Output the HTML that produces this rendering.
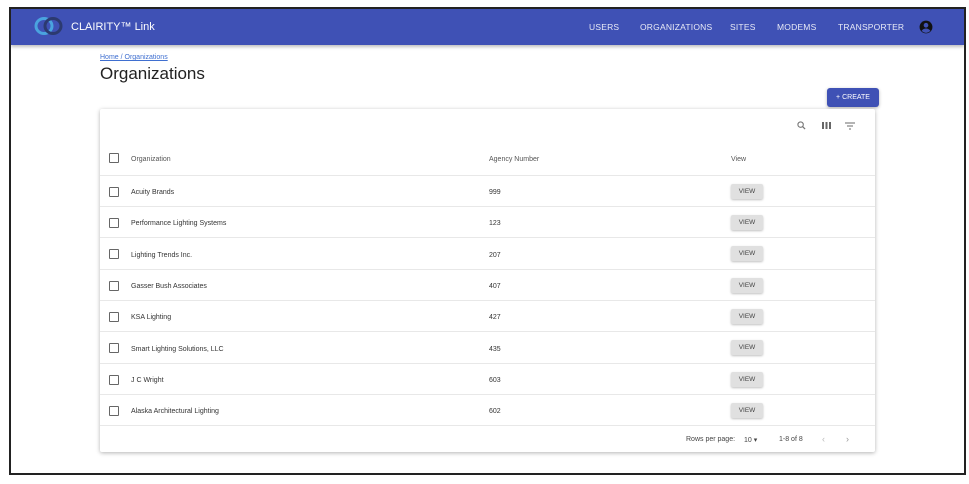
<!DOCTYPE html>
<html><head><meta charset="utf-8"><style>
*{box-sizing:border-box;margin:0;padding:0}
body{width:969px;height:484px;background:#fff;font-family:"Liberation Sans",sans-serif;position:relative;overflow:hidden}
.frame{position:absolute;left:9px;top:7px;width:957px;height:468px;border:2px solid #222;background:#fff;overflow:hidden}
.nav{position:absolute;left:0;top:0;width:953px;height:36px;background:#3f51b5;box-shadow:0 2px 3px rgba(0,0,0,.25)}
.nav .t{position:absolute;left:60px;top:12px;color:#fff;font-size:11px}
.nav .m{position:absolute;top:13px;color:#e8eaf6;font-size:8.5px;letter-spacing:.2px}
.a{position:absolute}
.bc{left:89px;top:45px;font-size:7px;color:#3f6fd0;text-decoration:underline}
.h1{left:89px;top:55px;font-size:17px;color:#222}
.create{left:816px;top:79px;width:52px;height:19px;background:#3f51b5;border-radius:3px;color:#fff;font-size:7px;text-align:center;line-height:19px;box-shadow:0 1px 3px rgba(0,0,0,.3)}
.card{left:89px;top:100px;width:775px;height:343px;background:#fff;box-shadow:0 1px 4px rgba(0,0,0,.3);border-radius:2px}
.row{position:absolute;left:0;width:775px;border-bottom:1px solid #e8e8e8;font-size:7px;color:#333}
.row span{margin-top:2px}
.cb{position:absolute;left:9px;width:10px;height:10px;border:1.3px solid #666;border-radius:1px}
.v{position:absolute;left:631px;width:32px;height:15px;background:#e0e0e0;border-radius:2px;font-size:6.5px;color:#444;text-align:center;line-height:15px;box-shadow:0 1px 2px rgba(0,0,0,.25)}
</style></head><body>
<div class="frame">
<div class="nav">
<svg style="position:absolute;left:23px;top:6px" width="30" height="22" viewBox="0 0 30 22"><ellipse cx="10" cy="11" rx="8" ry="7.5" fill="none" stroke="#4aa3df" stroke-width="3"/><ellipse cx="19" cy="11" rx="8" ry="7.5" fill="none" stroke="#2c3a70" stroke-width="3"/></svg>
<div class="t">CLAIRITY™ Link</div>
<div class="m" style="left:578px">USERS</div>
<div class="m" style="left:629px">ORGANIZATIONS</div>
<div class="m" style="left:719px">SITES</div>
<div class="m" style="left:766px">MODEMS</div>
<div class="m" style="left:827px">TRANSPORTER</div>
<svg style="position:absolute;left:908px;top:11px" width="14" height="14" viewBox="0 0 24 24"><circle cx="12" cy="12" r="11" fill="#111"/><circle cx="12" cy="9" r="4" fill="#3f51b5"/><path d="M4.5 18.5c2-3 5-4 7.5-4s5.5 1 7.5 4c-2 2.3-4.6 3.5-7.5 3.5s-5.5-1.2-7.5-3.5z" fill="#3f51b5"/></svg>
</div>
<div class="a bc">Home / Organizations</div>
<div class="a h1">Organizations</div>
<div class="a create">+ CREATE</div>
<div class="a card">
<svg style="position:absolute;left:697px;top:12px" width="9" height="9" viewBox="0 0 10 10"><circle cx="4" cy="4" r="3" fill="none" stroke="#777" stroke-width="1.2"/><path d="M6.2 6.2L9 9" stroke="#777" stroke-width="1.4"/></svg>
<svg style="position:absolute;left:722px;top:13px" width="9" height="7"><rect x="0" y="0" width="2" height="7" fill="#666"/><rect x="3.5" y="0" width="2" height="7" fill="#666"/><rect x="7" y="0" width="2" height="7" fill="#666"/></svg>
<svg style="position:absolute;left:745px;top:13px" width="10" height="8"><path d="M0 1h10M2 4h6M4 7h2" stroke="#888" stroke-width="1.2"/></svg>
<div class="row" style="top:31px;height:36px"><div class="cb" style="top:13px"></div><span class="a" style="left:31px;top:14px;color:#555">Organization</span><span class="a" style="left:389px;top:14px;color:#555">Agency Number</span><span class="a" style="left:631px;top:14px;color:#555">View</span></div>
<div class="row" style="top:67px;height:31px"><div class="cb" style="top:11px"></div><span class="a" style="left:31px;top:11px">Acuity Brands</span><span class="a" style="left:389px;top:11px">999</span><div class="v" style="top:8px">VIEW</div></div>
<div class="row" style="top:98px;height:31px"><div class="cb" style="top:11px"></div><span class="a" style="left:31px;top:11px">Performance Lighting Systems</span><span class="a" style="left:389px;top:11px">123</span><div class="v" style="top:8px">VIEW</div></div>
<div class="row" style="top:129px;height:32px"><div class="cb" style="top:11px"></div><span class="a" style="left:31px;top:12px">Lighting Trends Inc.</span><span class="a" style="left:389px;top:12px">207</span><div class="v" style="top:8px">VIEW</div></div>
<div class="row" style="top:161px;height:31px"><div class="cb" style="top:11px"></div><span class="a" style="left:31px;top:11px">Gasser Bush Associates</span><span class="a" style="left:389px;top:11px">407</span><div class="v" style="top:8px">VIEW</div></div>
<div class="row" style="top:192px;height:31px"><div class="cb" style="top:11px"></div><span class="a" style="left:31px;top:11px">KSA Lighting</span><span class="a" style="left:389px;top:11px">427</span><div class="v" style="top:8px">VIEW</div></div>
<div class="row" style="top:223px;height:32px"><div class="cb" style="top:11px"></div><span class="a" style="left:31px;top:12px">Smart Lighting Solutions, LLC</span><span class="a" style="left:389px;top:12px">435</span><div class="v" style="top:8px">VIEW</div></div>
<div class="row" style="top:255px;height:31px"><div class="cb" style="top:11px"></div><span class="a" style="left:31px;top:11px">J C Wright</span><span class="a" style="left:389px;top:11px">603</span><div class="v" style="top:8px">VIEW</div></div>
<div class="row" style="top:286px;height:31px"><div class="cb" style="top:11px"></div><span class="a" style="left:31px;top:11px">Alaska Architectural Lighting</span><span class="a" style="left:389px;top:11px">602</span><div class="v" style="top:8px">VIEW</div></div>
<div class="a" style="left:586px;top:327px;font-size:7px;color:#444">Rows per page:</div>
<div class="a" style="left:644px;top:327px;font-size:7px;color:#444">10 ▾</div>
<div class="a" style="left:679px;top:327px;font-size:7px;color:#444">1-8 of 8</div>
<div class="a" style="left:722px;top:325px;font-size:9px;color:#bbb">‹</div>
<div class="a" style="left:746px;top:325px;font-size:9px;color:#999">›</div>
</div>
</div>
</body></html>
